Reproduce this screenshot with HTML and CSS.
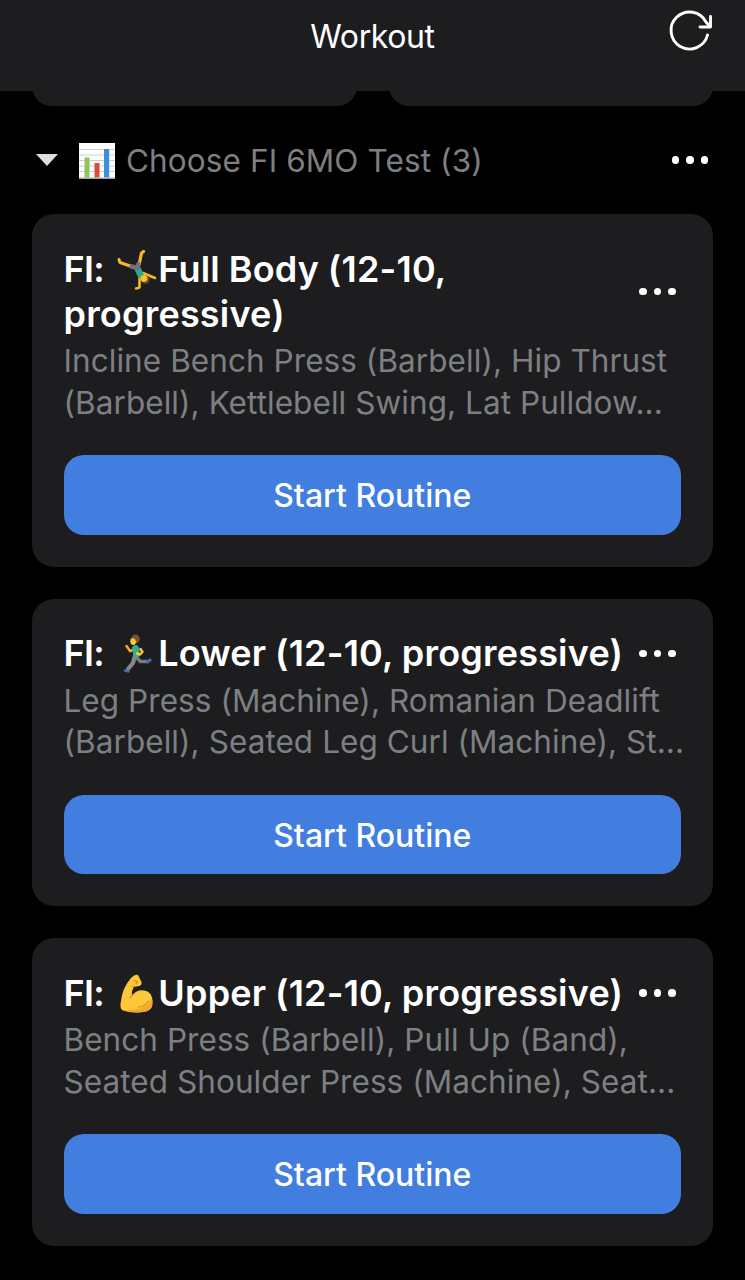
FILE: index.html
```
<!DOCTYPE html>
<html lang="en">
<head>
  <meta charset="UTF-8" />
  <meta name="viewport" content="width=device-width, initial-scale=1" />
  <title>Workout</title>
  <link rel="stylesheet" href="styles.css">
</head>
<body>

  <header class="topbar">
    <h1>Workout</h1>
    <button class="refresh" aria-label="Refresh">
      <svg width="46" height="46" viewBox="0 0 46 46" fill="none" stroke="#fff" stroke-width="2.9" stroke-linecap="round" stroke-linejoin="round">
        <path d="M40.5 27 A18.5 18.5 0 1 1 39 14 L42.5 18" />
        <path d="M43.5 8.5 V19 H33" />
      </svg>
    </button>
  </header>

  <div class="tiles">
    <div class="tile"></div>
    <div class="tile"></div>
  </div>

  <section class="folder">
    <span class="caret"></span>
    <svg class="chart" width="36" height="36" viewBox="0 0 36 36">
      <rect width="36" height="36" fill="#fdfdfd" />
      <path d="M0 6.5H36M0 12H36M0 17.5H36M0 23H36M0 28.5H36" stroke="#ccd0d1" stroke-width="1" />
      <rect x="5.5" y="14.5" width="5" height="20" fill="#91c45c" />
      <rect x="15.5" y="20" width="5" height="14.5" fill="#dd4a40" />
      <rect x="25" y="6" width="5.2" height="28.5" fill="#3d8ee0" />
      <path d="M0 35.2H36" stroke="#9eaaa9" stroke-width="1.5" />
    </svg>
    <h2>Choose FI 6MO Test (3)</h2>
    <button class="more" aria-label="Folder options"><i></i><i></i><i></i></button>
  </section>

  <main class="routines">
    <article class="card">
      <div class="card-head">
        <h3><span class="prefix">FI:</span> <svg class="emoji" width="44" height="44" viewBox="0 0 44 44" fill="none" stroke-linecap="round" stroke-linejoin="round">
            <path d="M17 17 L4 12.5 L3 9.5" stroke="#f5b928" stroke-width="3" />
            <path d="M23 15 L25.5 3 L27.5 1.5" stroke="#f5b928" stroke-width="3.2" />
            <path d="M23.5 28 L23.5 37.5 L20 38.5" stroke="#f5b928" stroke-width="2.6" />
            <path d="M27 23 L39 28" stroke="#f5b928" stroke-width="2.6" />
            <path d="M22 19.5 L24.5 25" stroke="#2ba78b" stroke-width="6.5" />
            <path d="M15.5 16.5 L21.5 18 L22.5 14" stroke="#72717d" stroke-width="4.5" />
            <circle cx="29.5" cy="29.8" r="4.2" fill="#6b4423" />
            <circle cx="28" cy="28.5" r="3.4" fill="#fbc52c" />
          </svg>Full Body (12-10,<br>progressive)</h3>
        <button class="more" aria-label="Routine options"><i></i><i></i><i></i></button>
      </div>
      <p>Incline Bench Press (Barbell), Hip Thrust<br>(Barbell), Kettlebell Swing, Lat Pulldow...</p>
      <button class="start">Start Routine</button>
    </article>

    <article class="card">
      <div class="card-head">
        <h3><span class="prefix">FI:</span> <svg class="emoji" width="44" height="44" viewBox="0 0 44 44" fill="none" stroke-linecap="round" stroke-linejoin="round">
            <path d="M17 16 L14 17 L10.5 12" stroke="#eeb523" stroke-width="2.4" />
            <path d="M20 23 L24.5 27.5 L31 27.5" stroke="#777a80" stroke-width="3.6" />
            <path d="M18.5 23 L17 29 L12 35" stroke="#85878c" stroke-width="4.2" />
            <path d="M31.5 28 L34 26" stroke="#416bb2" stroke-width="3.2" />
            <path d="M9 36.500 L12.5 37.5" stroke="#416bb2" stroke-width="2.6" />
            <path d="M19.5 14.5 L20.5 20" stroke="#35ac8e" stroke-width="6.8" />
            <path d="M24.5 15 L26.5 18 L24 20.5 L21 19.5" stroke="#fbc832" stroke-width="2.4" />
            <circle cx="19.500" cy="5" r="4.4" fill="#795031" />
            <path d="M14.5 5 Q17.5 3.500 19 5.500 L20.5 8 L18.5 11 Q14.500 11.500 14.3 7.500Z" fill="#fbc832" />
          </svg>Lower (12-10, progressive)</h3>
        <button class="more" aria-label="Routine options"><i></i><i></i><i></i></button>
      </div>
      <p>Leg Press (Machine), Romanian Deadlift<br>(Barbell), Seated Leg Curl (Machine), St...</p>
      <button class="start">Start Routine</button>
    </article>

    <article class="card">
      <div class="card-head">
        <h3><span class="prefix">FI:</span> <svg class="emoji" width="44" height="44" viewBox="0 0 44 44" fill="none" stroke-linecap="round" stroke-linejoin="round">
            <path d="M15 4 Q19 0 22 1 L25.5 8 Q26 11.5 23 12 L18 13 Q15 17.5 16 21.5 Q21 15.5 28 16.5 Q36.5 17.5 36.5 28 Q37 36 30 37.5 Q18 40 7 36.5 Q4 35 4.5 30 Q6 14 15 4Z" fill="#fcc837" />
            <path d="M36 23 Q38.5 34.5 30 37.5 Q18 40 7 36.5 Q21 37 29 32.5 Q35 29.5 36 23Z" fill="#f3a638" />
            <path d="M14 24 Q16 20.5 18 20 M22 33 Q29 33 33 27 M18 6.5 L21.5 7.5 L20 10 M16 12.5 L19 12.5" stroke="#d98527" stroke-width="1.2" />
          </svg>Upper (12-10, progressive)</h3>
        <button class="more" aria-label="Routine options"><i></i><i></i><i></i></button>
      </div>
      <p>Bench Press (Barbell), Pull Up (Band),<br>Seated Shoulder Press (Machine), Seat...</p>
      <button class="start">Start Routine</button>
    </article>
  </main>

</body>
</html>
```
FILE: styles.css
```
:root {
  --bg: #000;
  --panel: #1d1d1f;
  --text: #fff;
  --muted: #7d8083;
  --blue: #427ee0;
}
* {
  box-sizing: border-box;
}
body {
  margin: 0;
  height: 1280px;
  overflow: hidden;
  background-color: var(--bg);
  color: var(--text);
  font-family: Inter, "Liberation Sans", sans-serif;
}
h1, h2, h3, p {
  margin: 0;
  white-space: nowrap;
}
button {
  border: 0;
  padding: 0;
  background: none;
  color: inherit;
  font-family: inherit;
}
.topbar {
  display: grid;
  grid-template-columns: 1fr auto 1fr;
  align-items: start;
  height: 91px;
  padding: 8px 32px 0;
  background-color: var(--panel);
}
.topbar h1 {
  grid-column: 2;
  padding-top: 9px;
  font-size: 32px;
  line-height: 40px;
  font-weight: 400;
  letter-spacing: -0.4px;
}
.refresh {
  justify-self: end;
  height: 46px;
}
.tiles {
  display: grid;
  grid-template-columns: 1fr 1fr;
  gap: 32px;
  padding: 0 32px;
  height: 15px;
  overflow: hidden;
}
.tile {
  height: 80px;
  margin-top: -65px;
  border-radius: 20px;
  background-color: var(--panel);
}
.folder {
  display: flex;
  align-items: center;
  height: 108px;
  padding: 0 37px 0 36px;
}
.caret {
  border: 11px solid transparent;
  border-top: 12px solid #dedede;
  border-bottom: 0;
}
.chart {
  margin: 2px 11px 0 21px;
}
.folder h2 {
  flex: 1;
  color: var(--muted);
  font-size: 31.5px;
  font-weight: 400;
  letter-spacing: 0.1px;
}
.more {
  display: flex;
  gap: 7px;
}
.more i {
  width: 7.5px;
  height: 7.5px;
  border-radius: 50%;
  background-color: #fff;
}
.routines {
  display: grid;
  grid-template-columns: minmax(0, 1fr);
  gap: 32px;
  padding: 0 32px;
}
.card {
  padding: 32.5px 32px 32px 31.5px;
  border-radius: 22px;
  background-color: var(--panel);
}
.card-head {
  display: flex;
  justify-content: space-between;
  align-items: center;
  padding-right: 5.5px;
}
.card h3 {
  font-size: 36px;
  line-height: 45px;
  font-weight: 600;
  letter-spacing: 0.2px;
  word-spacing: -0.5px;
}
.prefix {
  letter-spacing: -0.7px;
}
.emoji {
  height: 44px;
  margin: -10px -1.5px -9px 3px;
  vertical-align: -9px;
  position: relative;
  top: -6px;
}
.card p {
  margin: 3.5px 0 32px;
  color: var(--muted);
  font-size: 31.5px;
  line-height: 41.5px;
  letter-spacing: 0.06px;
}
.start {
  display: block;
  width: 100%;
  height: 79.5px;
  padding-top: 2px;
  border-radius: 20px;
  background-color: var(--blue);
  font-size: 32px;
  font-weight: 500;
}
```
